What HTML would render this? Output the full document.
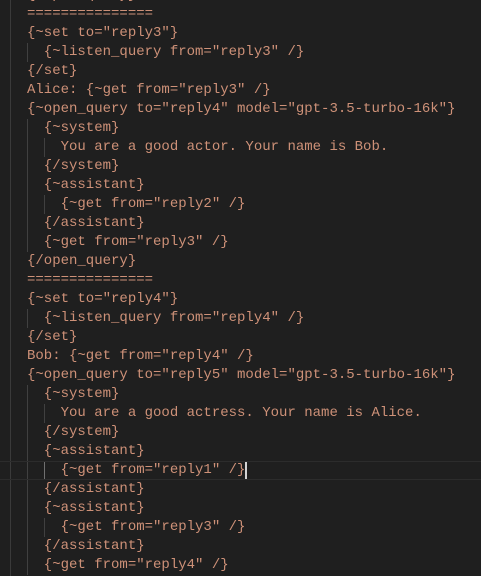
<!DOCTYPE html>
<html><head><style>
html,body{margin:0;padding:0;background:#1f1f1f;width:481px;height:576px;overflow:hidden}
#ed{position:relative;width:481px;height:576px;font-family:"Liberation Mono",monospace;font-size:14px;color:#ce9178;overflow:hidden}
.vl{position:absolute;left:10px;top:0;width:1px;height:576px;background:#3a3a3a}
#c{position:absolute;left:0;top:-14px;width:481px}
.l{position:relative;height:19px;line-height:19px;white-space:pre;width:481px;box-sizing:border-box}
.t{position:absolute;left:27px;top:0}
.g1,.g2{position:absolute;top:0;width:1px;height:19px;background:#404040}
.g1{left:27px}.g2{left:44px}
.cur{border-top:1px solid #2c2c2c;border-bottom:1px solid #2c2c2c;line-height:17px}
.cur .g1,.cur .g2{height:17px}
.cur .g2{background:#707070}
.k{display:inline-block;width:2px;height:17px;background:#d4d4d4;vertical-align:top}
</style></head><body><div id="ed"><div class="vl"></div><div id="c">
<div class="l"><span class="t">{/open_query}</span></div>
<div class="l"><span class="t">===============</span></div>
<div class="l"><span class="t">{~set to="reply3"}</span></div>
<div class="l"><div class="g1"></div><span class="t">  {~listen_query from="reply3" /}</span></div>
<div class="l"><span class="t">{/set}</span></div>
<div class="l"><span class="t">Alice: {~get from="reply3" /}</span></div>
<div class="l"><span class="t">{~open_query to="reply4" model="gpt-3.5-turbo-16k"}</span></div>
<div class="l"><div class="g1"></div><span class="t">  {~system}</span></div>
<div class="l"><div class="g1"></div><div class="g2"></div><span class="t">    You are a good actor. Your name is Bob.</span></div>
<div class="l"><div class="g1"></div><span class="t">  {/system}</span></div>
<div class="l"><div class="g1"></div><span class="t">  {~assistant}</span></div>
<div class="l"><div class="g1"></div><div class="g2"></div><span class="t">    {~get from="reply2" /}</span></div>
<div class="l"><div class="g1"></div><span class="t">  {/assistant}</span></div>
<div class="l"><div class="g1"></div><span class="t">  {~get from="reply3" /}</span></div>
<div class="l"><span class="t">{/open_query}</span></div>
<div class="l"><span class="t">===============</span></div>
<div class="l"><span class="t">{~set to="reply4"}</span></div>
<div class="l"><div class="g1"></div><span class="t">  {~listen_query from="reply4" /}</span></div>
<div class="l"><span class="t">{/set}</span></div>
<div class="l"><span class="t">Bob: {~get from="reply4" /}</span></div>
<div class="l"><span class="t">{~open_query to="reply5" model="gpt-3.5-turbo-16k"}</span></div>
<div class="l"><div class="g1"></div><span class="t">  {~system}</span></div>
<div class="l"><div class="g1"></div><div class="g2"></div><span class="t">    You are a good actress. Your name is Alice.</span></div>
<div class="l"><div class="g1"></div><span class="t">  {/system}</span></div>
<div class="l"><div class="g1"></div><span class="t">  {~assistant}</span></div>
<div class="l cur"><div class="g1"></div><div class="g2"></div><span class="t">    {~get from="reply1" /}<span class="k"></span></span></div>
<div class="l"><div class="g1"></div><span class="t">  {/assistant}</span></div>
<div class="l"><div class="g1"></div><span class="t">  {~assistant}</span></div>
<div class="l"><div class="g1"></div><div class="g2"></div><span class="t">    {~get from="reply3" /}</span></div>
<div class="l"><div class="g1"></div><span class="t">  {/assistant}</span></div>
<div class="l"><div class="g1"></div><span class="t">  {~get from="reply4" /}</span></div>
</div></div></body></html>
